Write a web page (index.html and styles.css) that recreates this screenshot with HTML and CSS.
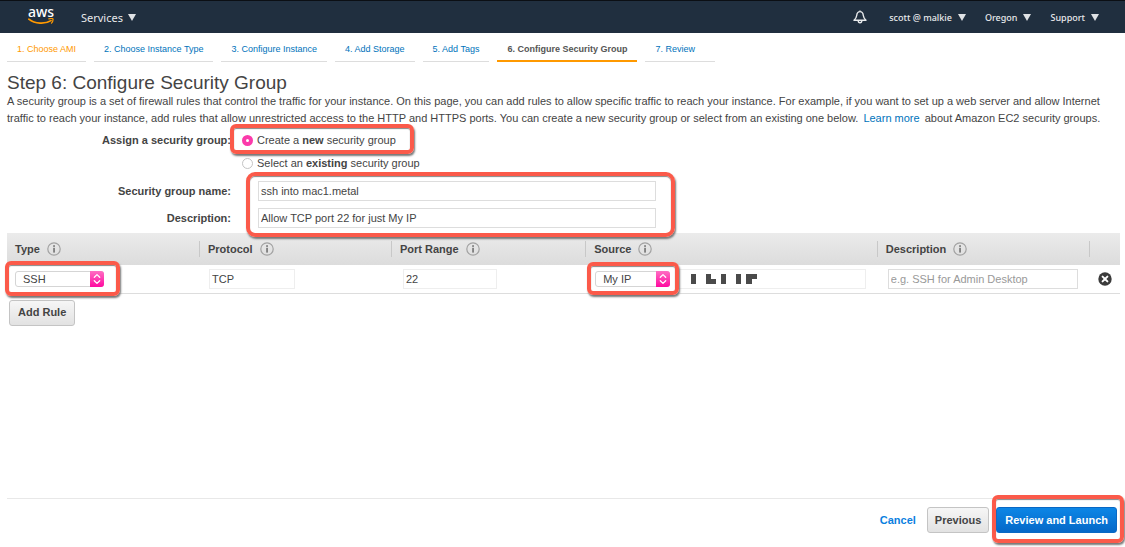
FILE: index.html
```html
<!DOCTYPE html>
<html lang="en">
<head>
<meta charset="utf-8">
<title>Step 6: Configure Security Group</title>
<link rel="stylesheet" href="styles.css">
</head>
<body>
<svg class="sprite" aria-hidden="true">
  <symbol id="info" viewBox="0 0 14 14">
    <circle cx="7" cy="7" r="6.2" fill="none" stroke="#a2a2a2" stroke-width="1.2"/>
    <rect x="6.2" y="3.2" width="1.7" height="1.7" fill="#777"/>
    <rect x="6.2" y="5.8" width="1.7" height="4.8" fill="#777"/>
  </symbol>
  <symbol id="stepper" viewBox="0 0 14 16">
    <path d="M4.3 6.2 7 3.6l2.7 2.6M4.3 9.8 7 12.4l2.7-2.6" fill="none" stroke="#fff" stroke-width="1.3" stroke-linecap="round" stroke-linejoin="round"/>
  </symbol>
</svg>

<header class="topbar">
  <a class="logo" href="#" aria-label="AWS home">
    <span class="logo-text">aws</span>
    <svg class="smile" viewBox="0 0 26 7" aria-hidden="true">
      <path d="M.8 1.2C7 6 17 6.500 23 2.600" fill="none" stroke="#f90" stroke-width="1.7" stroke-linecap="round"/>
      <path d="M20.800.900c1.500-.5 3.300-.5 4.200-.1.200 1.300-.3 3.100-1.500 4.400" fill="none" stroke="#f90" stroke-width="1.2" stroke-linecap="round" stroke-linejoin="round"/>
    </svg>
  </a>
  <button class="menu menu-main" type="button">Services <span class="caret"></span></button>
  <nav class="account" aria-label="Account">
    <button class="bell" type="button" aria-label="Notifications">
      <svg viewBox="0 0 14 14" aria-hidden="true">
        <path d="M7 1.600C4.700 1.600 3.900 3.400 3.700 5.500 3.500 7.600 2.700 8.700 1 10.200h12c-1.700-1.500-2.500-2.600-2.700-4.700C10.100 3.400 9.300 1.600 7 1.600ZM7 .500v1M5.200 10.500c0 3 3.600 3 3.600 0" fill="none" stroke="#e8eaec" stroke-width="1.4" stroke-linejoin="round"/>
      </svg>
    </button>
    <button class="menu" type="button">scott @ malkie <span class="caret"></span></button>
    <button class="menu" type="button">Oregon <span class="caret"></span></button>
    <button class="menu" type="button">Support <span class="caret"></span></button>
  </nav>
</header>

<nav class="steps" aria-label="Wizard steps">
  <a class="step first" href="#">1. Choose AMI</a>
  <a class="step" href="#">2. Choose Instance Type</a>
  <a class="step" href="#">3. Configure Instance</a>
  <a class="step" href="#">4. Add Storage</a>
  <a class="step" href="#">5. Add Tags</a>
  <a class="step current" href="#" aria-current="step">6. Configure Security Group</a>
  <a class="step last" href="#">7. Review</a>
</nav>

<main class="content">
  <h1 class="title">Step 6: Configure Security Group</h1>
  <p class="intro">A security group is a set of firewall rules that control the traffic for your instance. On this page, you can add rules to allow specific traffic to reach your instance. For example, if you want to set up a web server and allow Internet traffic to reach your instance, add rules that allow unrestricted access to the HTTP and HTTPS ports. You can create a new security group or select from an existing one below. <a class="learn" href="#">Learn more</a> about Amazon EC2 security groups.</p>

  <form class="group-form">
    <div class="row" role="radiogroup" aria-labelledby="assign">
      <span class="label" id="assign">Assign a security group:</span>
      <div class="choices">
        <label class="choice marked mark-choice"><input class="radio" type="radio" name="group" checked><span>Create a <b>new</b> security group</span></label>
        <label class="choice"><input class="radio" type="radio" name="group"><span>Select an <b>existing</b> security group</span></label>
      </div>
    </div>
    <div class="fields marked mark-fields">
      <label class="label" for="name">Security group name:</label>
      <input class="text" id="name" type="text" value="ssh into mac1.metal">
      <label class="label" for="desc">Description:</label>
      <input class="text" id="desc" type="text" value="Allow TCP port 22 for just My IP">
    </div>
  </form>

  <table class="rules">
    <colgroup><col class="c-type"><col class="c-protocol"><col class="c-port"><col class="c-source"><col class="c-desc"><col class="c-remove"></colgroup>
    <thead>
      <tr>
        <th><span class="head">Type <svg class="info"><use href="#info"/></svg></span></th>
        <th><span class="head">Protocol <svg class="info"><use href="#info"/></svg></span></th>
        <th><span class="head">Port Range <svg class="info"><use href="#info"/></svg></span></th>
        <th><span class="head">Source <svg class="info"><use href="#info"/></svg></span></th>
        <th><span class="head">Description <svg class="info"><use href="#info"/></svg></span></th>
        <th><span class="head"></span></th>
      </tr>
    </thead>
    <tbody>
      <tr>
        <td>
          <div class="picker picker-type marked mark-type">
            <select class="select" aria-label="Type"><option>SSH</option></select>
            <svg class="stepper"><use href="#stepper"/></svg>
          </div>
        </td>
        <td><input class="text cell-protocol" type="text" aria-label="Protocol" value="TCP" readonly></td>
        <td><input class="text cell-port" type="text" aria-label="Port range" value="22" readonly></td>
        <td>
          <div class="source">
            <div class="picker picker-source marked mark-source">
              <select class="select" aria-label="Source"><option>My IP</option></select>
              <svg class="stepper"><use href="#stepper"/></svg>
            </div>
            <div class="address">
              <input class="text" type="text" aria-label="Source address" readonly>
              <svg class="mosaic" viewBox="0 0 84 12" aria-hidden="true">
                <path d="M1 1h2v4H1zM16 1h5v10h-5zM31 1h5v5h5v5H31zM46 1h5v10h-5zM61 1h5v10h-5zM71 1h11v5h-5v5h-6z" fill="#4a4a4a"/>
              </svg>
            </div>
          </div>
        </td>
        <td><input class="text cell-desc" type="text" aria-label="Description" placeholder="e.g. SSH for Admin Desktop"></td>
        <td>
          <button class="remove" type="button" aria-label="Remove rule">
            <svg viewBox="0 0 14 14" aria-hidden="true"><circle cx="7" cy="7" r="6.700" fill="#3b3b3b"/><path d="m4.600 4.600 4.800 4.800M9.400 4.600 4.600 9.400" stroke="#fff" stroke-width="2" stroke-linecap="round"/></svg>
          </button>
        </td>
      </tr>
    </tbody>
  </table>
  <button class="btn add" type="button">Add Rule</button>
</main>

<footer class="actions">
  <a class="cancel" href="#">Cancel</a>
  <button class="btn previous" type="button">Previous</button>
  <span class="marked mark-launch"><button class="btn primary" type="button">Review and Launch</button></span>
</footer>
</body>
</html>
```
FILE: styles.css
```css
* { box-sizing: border-box; }

body {
  margin: 0;
  min-height: 100vh;
  display: flex;
  flex-direction: column;
  background: #fff;
  color: #444;
  font: 11px/17px "Liberation Sans", Arial, sans-serif;
}

button, input, select { font: inherit; color: inherit; }
button { cursor: pointer; }
a { text-decoration: none; }
.sprite { position: absolute; width: 0; height: 0; }

/* Top bar */
.topbar {
  display: flex;
  align-items: center;
  height: 33px;
  padding: 0 26px 0 28px;
  border-top: 1px solid #0b0f14;
  background: #202f3f;
  color: #e8eaec;
  font-family: "Noto Sans", "Open Sans", sans-serif;
}
.logo { display: flex; flex-direction: column; align-items: center; width: 26px; padding-bottom: 3px; color: #fff; }
.logo-text { font-size: 14px; line-height: 12px; font-weight: 500; }
.smile { width: 26px; height: 7px; }
.menu {
  display: flex;
  align-items: center;
  gap: 6px;
  padding: 0;
  border: 0;
  background: none;
  font-size: 9px;
  font-weight: 500;
}
.menu-main { margin-left: 27px; font-size: 11px; font-weight: 400; gap: 5px; }
.caret { border: 4px solid transparent; border-top: 7px solid #dfe2e5; border-bottom: 0; }
.account { display: flex; align-items: center; gap: 19px; margin-left: auto; }
.bell { width: 14px; height: 14px; margin-right: 3px; padding: 0; border: 0; background: none; }
.bell svg { display: block; width: 14px; height: 14px; }

/* Wizard steps */
.steps { display: flex; gap: 8px; padding: 8px 7px 0; font-size: 9px; }
.step {
  padding: 0 10px 2px;
  border-bottom: 1px solid #ddd;
  color: #0073bb;
}
.step.first { color: #f90; }
.step.current { border-bottom: 2px solid #f90; color: #555; font-weight: bold; }
.step.last { min-width: 70px; }

/* Content */
.content { padding: 0 5px 0 7px; }
.title { margin: 11px 0 0; font-size: 19px; line-height: 20px; font-weight: normal; }
.intro { margin: 0; }
.learn { margin-left: 2px; margin-right: 2px; color: #0073bb; }

.label { width: 224px; text-align: right; font-weight: bold; }
.row { display: flex; gap: 11px; padding-top: 5px; }
.choices { display: flex; flex-direction: column; align-items: flex-start; gap: 6px; }
.choice { display: flex; align-items: center; gap: 4px; }
.radio {
  appearance: none;
  width: 11px;
  height: 11px;
  margin: 0;
  border: 1px solid #c4c4c4;
  border-radius: 50%;
}
.radio:checked { border: 4px solid #fb3bab; }
.fields {
  display: grid;
  grid-template-columns: 224px 398px;
  gap: 7px 27px;
  align-items: center;
  padding: 9px 0 5px;
  width: fit-content;
}
.text {
  width: 100%;
  height: 20px;
  padding: 0 2px;
  border: 1px solid #ddd;
  border-radius: 0;
  background: #fff;
  display: block;
}
.text::placeholder { color: #999; opacity: 1; }

/* Rules table */
.rules { width: 100%; table-layout: fixed; border-collapse: collapse; }
.c-type, .c-protocol { width: 17.25%; }
.c-port { width: 17.45%; }
.c-source { width: 26.2%; }
.c-desc { width: 19.05%; }
.rules thead { background: linear-gradient(#ebebeb, #dcdcdc); }
.rules th { height: 32px; padding: 0; text-align: left; }
.head { display: flex; align-items: center; gap: 7px; height: 16px; padding-left: 8px; border-left: 1px solid #c8c8c8; }
th:first-child .head { border-left-color: transparent; padding-left: 7px; }
.info { width: 14px; height: 14px; }
.rules td { height: 28px; padding: 0; border-bottom: 1px solid #ddd; }
.rules td .text { border-color: #eee; }
.rules td .cell-protocol { width: 86px; margin-left: 10px; }
.rules td .cell-port { width: 94px; margin-left: 12px; }
.rules td .cell-desc { width: 190px; margin-left: 11px; border-color: #ddd; }
.picker { height: 16px; }
.picker-type { width: 89px; margin-left: 8px; }
.picker-source { width: 75px; margin-left: 10px; }
.select {
  appearance: none;
  display: block;
  width: 100%;
  height: 16px;
  padding: 0 7px;
  border: 1px solid #d5d5d5;
  border-radius: 3px;
  background: #fff;
  line-height: 14px;
}
.stepper {
  position: absolute;
  top: 0;
  right: 0;
  width: 14px;
  height: 16px;
  border-radius: 0 3px 3px 0;
  background: linear-gradient(#ff6ec3, #ff0aa0);
  pointer-events: none;
}
.source { display: flex; align-items: center; }
.address { position: relative; flex: 1; margin: 0 11px 0 5px; }
.rules .address .text { border-left: 0; }
.mosaic { position: absolute; top: 4px; left: 0; width: 84px; height: 12px; }
.remove { display: block; width: 14px; height: 14px; margin-left: 9px; padding: 0; border: 0; background: none; }
.remove svg { display: block; }

/* Buttons */
.btn {
  display: block;
  height: 26px;
  padding: 0 8px;
  border: 1px solid #c4c4c4;
  border-radius: 3px;
  background: linear-gradient(#f6f6f6, #e2e2e2);
  font-weight: bold;
}
.add { margin: 6px 0 0 2px; }
.btn.previous { padding: 0 7px; }
.btn.primary { border-color: #0a68c4; background: linear-gradient(#0c86e6, #0568c8); color: #fff; }
.actions {
  display: flex;
  align-items: center;
  justify-content: flex-end;
  gap: 7px;
  margin: auto 5px 0 7px;
  padding: 8px 3px 14px 0;
  border-top: 1px solid #e8e8e8;
}
.cancel { margin-right: 4px; color: #0a80e0; font-weight: bold; }

/* Highlight frames */
.marked { position: relative; }
.marked::after {
  content: "";
  position: absolute;
  z-index: 1;
  border: 4px solid #fb5a4a;
  border-radius: 6px;
  box-shadow: 1px 2px 2px #777, inset 0 1px 1px #888;
  pointer-events: none;
}
.mark-choice::after { inset: -8px -18px -5px -12px; }
.mark-fields::after { inset: 0 -19px -4px 239px; border-radius: 9px; }
.mark-type::after { inset: -10px -16px -9px -10px; }
.mark-source::after { inset: -9px -9px -8px -8px; }
.mark-launch::after { inset: -12px -7px -10px -4px; }
```
